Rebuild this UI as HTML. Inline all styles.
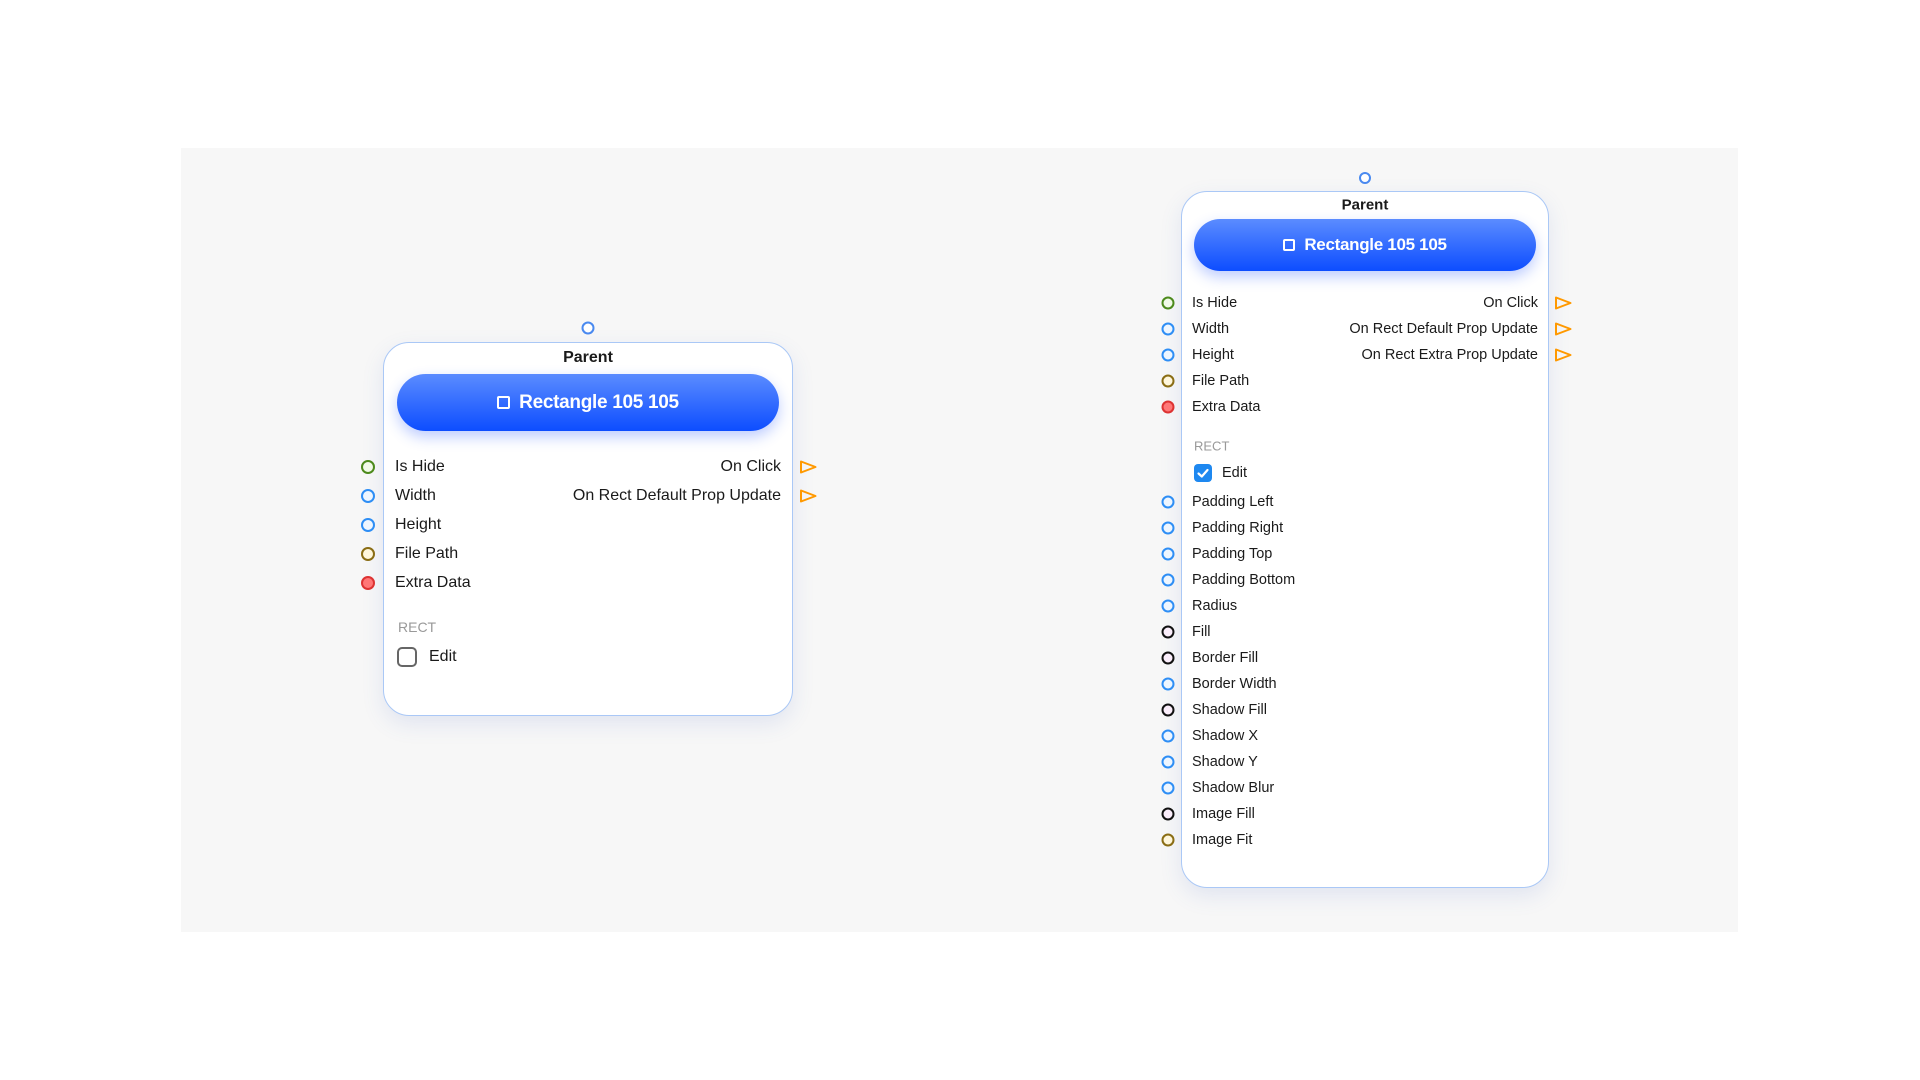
<!DOCTYPE html>
<html><head><meta charset="utf-8"><style>
*{margin:0;padding:0;box-sizing:border-box}
body{width:1920px;height:1080px;background:#fff;position:relative;overflow:hidden;font-family:"Liberation Sans",sans-serif;color:#1a1a1a}
.bg{position:absolute;left:181px;top:148px;width:1557px;height:784px;background:#f7f7f7}
.card{position:absolute;background:#fff;border:1.5px solid #aac8f6;border-radius:26px;box-shadow:0 8px 22px rgba(80,110,200,0.13)}
.btn{position:absolute;border-radius:40px;background:linear-gradient(#5b8cff,#0d4dff);box-shadow:0 6px 14px rgba(40,90,255,0.3);color:#fff;font-weight:bold;display:flex;align-items:center;justify-content:center;letter-spacing:-0.3px}
.btn i{display:inline-block;border:2px solid #fff;border-radius:2px;margin-right:9px}
.t{position:absolute;white-space:nowrap;transform:translateY(-50%)}
.r{text-align:right}
.dot{position:absolute;border-radius:50%;transform:translate(-50%,-50%)}
.tri{position:absolute;transform:translateY(-50%)}
.title{position:absolute;font-weight:bold;transform:translate(-50%,-50%)}
.sec{color:#999}
</style></head><body>
<div class="bg"></div>

<div class="dot" style="left:588px;top:328px;width:13px;height:13px;border:2px solid #4a8af0;background:#fff"></div>
<div class="card" style="left:383px;top:342px;width:410px;height:374px"></div>
<div class="title" style="left:588px;top:358px;font-size:16px">Parent</div>
<div class="btn" style="left:397px;top:374px;width:382px;height:57px;font-size:19px"><i style="width:13px;height:13px"></i>Rectangle 105 105</div>
<div style="font-size:16px">
<div class="dot" style="left:368px;top:467px;width:14px;height:14px;border:2.5px solid #4c8a1c;background:#f1fae8"></div>
<div class="t" style="left:395px;top:467px">Is Hide</div>
<div class="dot" style="left:368px;top:496px;width:14px;height:14px;border:2.5px solid #2e8ef5;background:#eef6ff"></div>
<div class="t" style="left:395px;top:496px">Width</div>
<div class="dot" style="left:368px;top:525px;width:14px;height:14px;border:2.5px solid #2e8ef5;background:#eef6ff"></div>
<div class="t" style="left:395px;top:525px">Height</div>
<div class="dot" style="left:368px;top:554px;width:14px;height:14px;border:2.5px solid #8a6d14;background:#fff7dc"></div>
<div class="t" style="left:395px;top:554px">File Path</div>
<div class="dot" style="left:368px;top:583px;width:14px;height:14px;border:2.5px solid #d33;background:#f77"></div>
<div class="t" style="left:395px;top:583px">Extra Data</div>
<div class="t r" style="right:1139px;top:467px">On Click</div>
<div class="t r" style="right:1139px;top:496px">On Rect Default Prop Update</div>
<svg class="tri" style="left:799px;top:467px" width="20" height="16"><path d="M2 2.5 L16.5 8 L2 13.5 Z" fill="none" stroke="#f90" stroke-width="2" stroke-linejoin="round"/></svg>
<svg class="tri" style="left:799px;top:496px" width="20" height="16"><path d="M2 2.5 L16.5 8 L2 13.5 Z" fill="none" stroke="#f90" stroke-width="2" stroke-linejoin="round"/></svg>
<div class="t sec" style="left:398px;top:627px;font-size:14px">RECT</div>
<div style="position:absolute;left:397px;top:647px;width:20px;height:20px;border:2.5px solid #666;border-radius:5px"></div>
<div class="t" style="left:429px;top:657px">Edit</div>
</div>

<div class="dot" style="left:1365px;top:178px;width:12px;height:12px;border:2px solid #4a8af0;background:#fff"></div>
<div class="card" style="left:1181px;top:191px;width:368px;height:697px"></div>
<div class="title" style="left:1365px;top:205px;font-size:15px">Parent</div>
<div class="btn" style="left:1194px;top:219px;width:342px;height:52px;font-size:17px"><i style="width:12px;height:12px"></i>Rectangle 105 105</div>
<div style="font-size:14.5px">
<div class="t r" style="right:382px;top:303px">On Click</div>
<div class="t r" style="right:382px;top:329px">On Rect Default Prop Update</div>
<div class="t r" style="right:382px;top:355px">On Rect Extra Prop Update</div>
<svg class="tri" style="left:1554px;top:303px" width="20" height="16"><path d="M2 2.5 L16.5 8 L2 13.5 Z" fill="none" stroke="#f90" stroke-width="2" stroke-linejoin="round"/></svg>
<svg class="tri" style="left:1554px;top:329px" width="20" height="16"><path d="M2 2.5 L16.5 8 L2 13.5 Z" fill="none" stroke="#f90" stroke-width="2" stroke-linejoin="round"/></svg>
<svg class="tri" style="left:1554px;top:355px" width="20" height="16"><path d="M2 2.5 L16.5 8 L2 13.5 Z" fill="none" stroke="#f90" stroke-width="2" stroke-linejoin="round"/></svg>

<div class="dot" style="left:1168px;top:303px;width:13px;height:13px;border:2.3px solid #4c8a1c;background:#f1fae8"></div><div class="t" style="left:1192px;top:303px">Is Hide</div>
<div class="dot" style="left:1168px;top:329px;width:13px;height:13px;border:2.3px solid #2e8ef5;background:#eef6ff"></div><div class="t" style="left:1192px;top:329px">Width</div>
<div class="dot" style="left:1168px;top:355px;width:13px;height:13px;border:2.3px solid #2e8ef5;background:#eef6ff"></div><div class="t" style="left:1192px;top:355px">Height</div>
<div class="dot" style="left:1168px;top:381px;width:13px;height:13px;border:2.3px solid #8a6d14;background:#fff7dc"></div><div class="t" style="left:1192px;top:381px">File Path</div>
<div class="dot" style="left:1168px;top:407px;width:13px;height:13px;border:2.3px solid #d33;background:#f77"></div><div class="t" style="left:1192px;top:407px">Extra Data</div>
<div class="t sec" style="left:1194px;top:446px;font-size:13px">RECT</div>
<svg style="position:absolute;left:1194px;top:464px" width="18" height="18"><rect x="0" y="0" width="18" height="18" rx="4" fill="#1e88f0"/><path d="M4.5 9.5 L7.8 12.5 L13.5 6" fill="none" stroke="#fff" stroke-width="2.2" stroke-linecap="round" stroke-linejoin="round"/></svg>
<div class="t" style="left:1222px;top:473px">Edit</div>

<div class="dot" style="left:1168px;top:502px;width:13px;height:13px;border:2.3px solid #2e8ef5;background:#eef6ff"></div><div class="t" style="left:1192px;top:502px">Padding Left</div>
<div class="dot" style="left:1168px;top:528px;width:13px;height:13px;border:2.3px solid #2e8ef5;background:#eef6ff"></div><div class="t" style="left:1192px;top:528px">Padding Right</div>
<div class="dot" style="left:1168px;top:554px;width:13px;height:13px;border:2.3px solid #2e8ef5;background:#eef6ff"></div><div class="t" style="left:1192px;top:554px">Padding Top</div>
<div class="dot" style="left:1168px;top:580px;width:13px;height:13px;border:2.3px solid #2e8ef5;background:#eef6ff"></div><div class="t" style="left:1192px;top:580px">Padding Bottom</div>
<div class="dot" style="left:1168px;top:606px;width:13px;height:13px;border:2.3px solid #2e8ef5;background:#eef6ff"></div><div class="t" style="left:1192px;top:606px">Radius</div>
<div class="dot" style="left:1168px;top:632px;width:13px;height:13px;border:2.3px solid #111;background:#fbeefb"></div><div class="t" style="left:1192px;top:632px">Fill</div>
<div class="dot" style="left:1168px;top:658px;width:13px;height:13px;border:2.3px solid #111;background:#fbeefb"></div><div class="t" style="left:1192px;top:658px">Border Fill</div>
<div class="dot" style="left:1168px;top:684px;width:13px;height:13px;border:2.3px solid #2e8ef5;background:#eef6ff"></div><div class="t" style="left:1192px;top:684px">Border Width</div>
<div class="dot" style="left:1168px;top:710px;width:13px;height:13px;border:2.3px solid #111;background:#fbeefb"></div><div class="t" style="left:1192px;top:710px">Shadow Fill</div>
<div class="dot" style="left:1168px;top:736px;width:13px;height:13px;border:2.3px solid #2e8ef5;background:#eef6ff"></div><div class="t" style="left:1192px;top:736px">Shadow X</div>
<div class="dot" style="left:1168px;top:762px;width:13px;height:13px;border:2.3px solid #2e8ef5;background:#eef6ff"></div><div class="t" style="left:1192px;top:762px">Shadow Y</div>
<div class="dot" style="left:1168px;top:788px;width:13px;height:13px;border:2.3px solid #2e8ef5;background:#eef6ff"></div><div class="t" style="left:1192px;top:788px">Shadow Blur</div>
<div class="dot" style="left:1168px;top:814px;width:13px;height:13px;border:2.3px solid #111;background:#fbeefb"></div><div class="t" style="left:1192px;top:814px">Image Fill</div>
<div class="dot" style="left:1168px;top:840px;width:13px;height:13px;border:2.3px solid #8a6d14;background:#fff7dc"></div><div class="t" style="left:1192px;top:840px">Image Fit</div>
</div>
</body></html>
